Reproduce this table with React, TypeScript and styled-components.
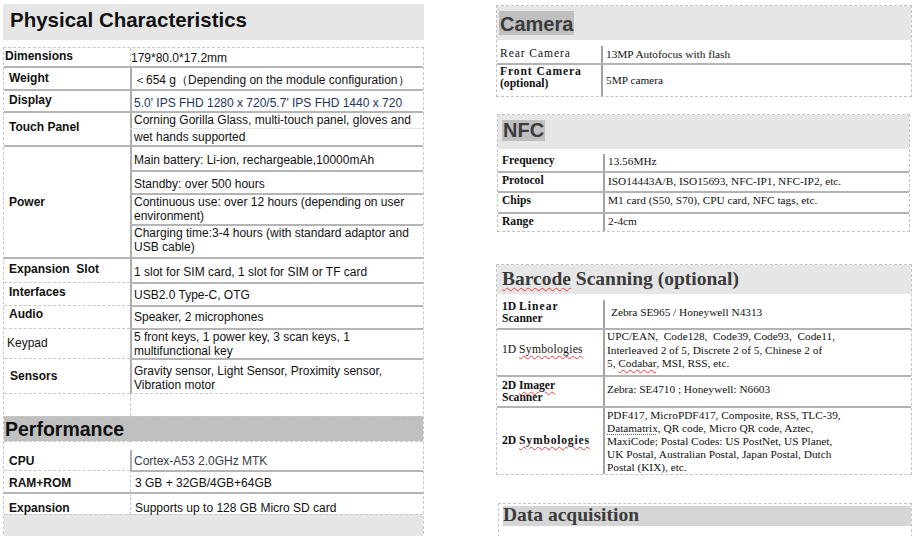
import React from 'react';
import styled, { createGlobalStyle } from 'styled-components';

type Line = 'none' | 'solid' | 'dashed' | 'faint';
const border = (l: Line) =>
  l === 'solid'
    ? '2px solid #b5b5b5'
    : l === 'dashed'
    ? '1px dashed #c8c8c8'
    : l === 'faint'
    ? '1px solid #e4e4e4'
    : '0';
const shift = (dy = 0) =>
  `padding-top:${Math.max(0, 2 * dy)}px;padding-bottom:${Math.max(0, -2 * dy)}px;`;

const GlobalStyle = createGlobalStyle`
  *, *::before, *::after { box-sizing: border-box; }
  html, body { margin: 0; padding: 0; background: #fff; }
  body { font-family: "Liberation Sans", Arial, sans-serif; color: #111; }
`;

const Page = styled.main`
  display: flex;
  align-items: flex-start;
  width: 914px;
  height: 536px;
  overflow: hidden;
`;

/* ---------- left sheet ---------- */

const LeftColumn = styled.div`
  flex: none;
  width: 421px;
  margin-left: 3px;
  padding-top: 4px;
`;

const SheetTitle = styled.h1`
  margin: 0;
  height: 36px;
  padding: 0 0 4px 7px;
  background: #e6e6e6;
  font: bold 20.5px/32px "Liberation Sans", Arial, sans-serif;
  color: #111;
  white-space: nowrap;
`;

const Sheet = styled.div`
  margin-top: 7px;
  border: 1px dashed #c8c8c8;
  border-bottom: 0;
`;

const SheetRow = styled.div<{ $h: number }>`
  display: grid;
  grid-template-columns: 126px 1fr;
  height: ${(p) => p.$h}px;
`;

const RowLabel = styled.div<{ $top: Line; $pl: number; $dy: number; $weight: number }>`
  display: flex;
  align-items: center;
  border-top: ${(p) => border(p.$top)};
  padding-left: ${(p) => p.$pl}px;
  ${(p) => shift(p.$dy)}
  font-size: 12px;
  font-weight: ${(p) => p.$weight};
  white-space: nowrap;
  color: #111;
`;

const RowValue = styled.div<{ $top: Line; $div: 'solid' | 'dashed'; $from: number }>`
  display: flex;
  flex-direction: column;
  border-top: ${(p) => border(p.$top)};
  ${(p) =>
    p.$div === 'dashed'
      ? 'border-left: 1px dashed #c8c8c8;'
      : `background: linear-gradient(#adadad, #adadad) 0 ${p.$from}px / 2px 100% no-repeat;`}
`;

const ValueLine = styled.div<{ $h?: number; $top: Line; $dy: number; $pl: number; $color: string }>`
  ${(p) => (p.$h ? `height:${p.$h}px; flex:none;` : 'flex:1;')}
  display: flex;
  flex-direction: column;
  justify-content: center;
  border-top: ${(p) => border(p.$top)};
  padding-left: ${(p) => p.$pl}px;
  ${(p) => shift(p.$dy)}
  font-size: 12px;
  line-height: 14px;
  color: ${(p) => p.$color};
  white-space: nowrap;
`;

const Band = styled.div`
  height: 25px;
  border-top: 1px dashed #c8c8c8;
  background: #c0c0c0;
  padding-left: 1px;
  font: bold 19.5px/24px "Liberation Sans", Arial, sans-serif;
  color: #111;
`;

const SheetFooter = styled.div`
  height: 30px;
  border-top: 1px dashed #c8c8c8;
  background: #e6e6e6;
`;

interface Sub {
  h?: number;
  top?: Line;
  dy?: number;
  lines: string[];
}
interface PRow {
  label: string;
  h: number;
  ltop: Line;
  vtop: Line;
  lpl?: number;
  ldy?: number;
  lw?: number;
  div: 'solid' | 'dashed';
  from?: number;
  vpl?: number;
  color?: string;
  subs: Sub[];
}

const physical: PRow[] = [
  { label: 'Dimensions', h: 18, ltop: 'none', vtop: 'none', lpl: 1, ldy: -1, div: 'dashed', vpl: 0, subs: [{ dy: 0.5, lines: ['179*80.0*17.2mm'] }] },
  { label: 'Weight', h: 23, ltop: 'solid', vtop: 'solid', ldy: -1, div: 'solid', subs: [{ dy: 1.5, lines: ['＜654 g（Depending on the module configuration）'] }] },
  { label: 'Display', h: 22, ltop: 'solid', vtop: 'solid', ldy: -1, div: 'solid', color: '#22375f', subs: [{ dy: 2, lines: ["5.0' IPS FHD 1280 x 720/5.7' IPS FHD 1440 x 720"] }] },
  {
    label: 'Touch Panel', h: 34, ltop: 'solid', vtop: 'solid', ldy: -2, div: 'solid',
    subs: [
      { h: 15, dy: -0.5, lines: ['Corning Gorilla Glass, multi-touch panel, gloves and'] },
      { top: 'faint', dy: 0, lines: ['wet hands supported'] },
    ],
  },
  {
    label: 'Power', h: 112, ltop: 'solid', vtop: 'solid', ldy: 0, div: 'solid',
    subs: [
      { h: 23, dy: 1.5, lines: ['Main battery: Li-ion, rechargeable,10000mAh'] },
      { h: 23, top: 'solid', dy: 1, lines: ['Standby: over 500 hours'] },
      { h: 31, top: 'solid', dy: -1, lines: ['Continuous use: over 12 hours (depending on user', 'environment)'] },
      { top: 'solid', dy: -1.5, lines: ['Charging time:3-4 hours (with standard adaptor and', 'USB cable)'] },
    ],
  },
  { label: 'Expansion\u00a0 Slot', h: 25, ltop: 'solid', vtop: 'solid', ldy: -1.5, div: 'solid', subs: [{ dy: 1.5, lines: ['1 slot for SIM card, 1 slot for SIM or TF card'] }] },
  { label: 'Interfaces', h: 23, ltop: 'dashed', vtop: 'solid', ldy: -2.5, div: 'solid', subs: [{ dy: 0.5, lines: ['USB2.0 Type-C, OTG'] }] },
  { label: 'Audio', h: 23, ltop: 'dashed', vtop: 'solid', ldy: -3.5, div: 'solid', subs: [{ dy: -0.5, lines: ['Speaker, 2 microphones'] }] },
  { label: 'Keypad', h: 30, ltop: 'dashed', vtop: 'solid', lpl: 3, lw: 400, ldy: -2, div: 'solid', subs: [{ dy: -1, lines: ['5 front keys, 1 power key, 3 scan keys, 1', 'multifunctional key'] }] },
  { label: 'Sensors', h: 35, ltop: 'dashed', vtop: 'solid', lpl: 6, ldy: -0.5, div: 'solid', subs: [{ dy: 1.5, lines: ['Gravity sensor, Light Sensor, Proximity sensor,', 'Vibration motor'] }] },
  { label: '', h: 23, ltop: 'dashed', vtop: 'dashed', div: 'dashed', subs: [{ lines: [] }] },
];

const performance: PRow[] = [
  { label: 'CPU', h: 29, ltop: 'dashed', vtop: 'dashed', ldy: 5, div: 'solid', from: 8, color: '#353c48', subs: [{ dy: 5, lines: ['Cortex-A53 2.0GHz MTK'] }] },
  { label: 'RAM+ROM', h: 22, ltop: 'dashed', vtop: 'solid', ldy: 1.5, div: 'dashed', subs: [{ dy: 0.5, lines: ['3 GB + 32GB/4GB+64GB'] }] },
  { label: 'Expansion', h: 22, ltop: 'solid', vtop: 'solid', ldy: 3.5, div: 'dashed', subs: [{ dy: 3.5, lines: ['Supports up to 128 GB Micro SD card'] }] },
];

const SheetRows: React.FC<{ rows: PRow[] }> = ({ rows }) => (
  <>
    {rows.map((r, i) => (
      <SheetRow key={i} $h={r.h}>
        <RowLabel $top={r.ltop} $pl={r.lpl ?? 5} $dy={r.ldy ?? 0} $weight={r.lw ?? 700}>
          {r.label}
        </RowLabel>
        <RowValue $top={r.vtop} $div={r.div} $from={r.from ?? 0}>
          {r.subs.map((s, j) => (
            <ValueLine
              key={j}
              $h={s.h}
              $top={s.top ?? 'none'}
              $dy={s.dy ?? 0}
              $pl={r.vpl ?? 4}
              $color={r.color ?? '#111'}
            >
              {s.lines.map((l, k) => (
                <span key={k}>{l}</span>
              ))}
            </ValueLine>
          ))}
        </RowValue>
      </SheetRow>
    ))}
  </>
);

/* ---------- right boxes ---------- */

const RightColumn = styled.div`
  flex: none;
  width: 416px;
  margin-left: 72px;
  padding-top: 5px;
  display: flex;
  flex-direction: column;
`;

const SpecBox = styled.section<{ $mt: number; $ml: number; $w: number; $h?: number }>`
  flex: none;
  margin: ${(p) => p.$mt}px 0 0 ${(p) => p.$ml}px;
  width: ${(p) => p.$w}px;
  ${(p) => (p.$h ? `height:${p.$h}px;` : '')}
  border: 1px dashed #c4c4c4;
  font-family: "Liberation Serif", "Times New Roman", serif;
  color: #111;
`;

const BoxHead = styled.header<{ $h: number; $pt: number; $pl: number; $pr?: number; $bg?: string }>`
  height: ${(p) => p.$h}px;
  padding: ${(p) => p.$pt}px ${(p) => p.$pr ?? 0}px 0 ${(p) => p.$pl}px;
  background: ${(p) => p.$bg ?? '#e6e6e6'};
`;

const HeadMark = styled.h2<{ $lh: number; $pt: number }>`
  display: inline-block;
  margin: 0;
  padding: ${(p) => p.$pt}px 1px 0;
  background: #bfbfbf;
  font: bold 20px/${(p) => p.$lh}px "Liberation Sans", Arial, sans-serif;
  color: #3b3b3b;
`;

const SerifHeading = styled.h2<{ $bg?: string; $lh: number; $h?: number }>`
  margin: 0;
  ${(p) => (p.$h ? `height:${p.$h}px;` : '')}
  background: ${(p) => p.$bg ?? 'transparent'};
  font: bold 19.5px/${(p) => p.$lh}px "Liberation Serif", "Times New Roman", serif;
  color: #3b3b3b;
  white-space: nowrap;
`;

const SpecRow = styled.div<{ $h: number; $cols: number; $top?: boolean }>`
  display: grid;
  grid-template-columns: ${(p) => p.$cols}px 1fr;
  height: ${(p) => p.$h}px;
  border-top: ${(p) => (p.$top ? '2px solid #b3b3b3' : '0')};
`;

const SpecLabel = styled.div<{ $pl: number; $dy: number; $weight?: number }>`
  display: flex;
  flex-direction: column;
  justify-content: center;
  padding-left: ${(p) => p.$pl}px;
  ${(p) => shift(p.$dy)}
  font-size: 11.6px;
  line-height: 12px;
  font-weight: ${(p) => p.$weight ?? 700};
  white-space: nowrap;
`;

const SpecValue = styled.div<{ $from?: number; $pl: number; $dy: number; $lh?: number }>`
  display: flex;
  flex-direction: column;
  justify-content: center;
  padding-left: ${(p) => p.$pl}px;
  ${(p) => shift(p.$dy)}
  background: linear-gradient(#a3a3a3, #a3a3a3) 0 ${(p) => p.$from ?? 0}px / 2px 100% no-repeat;
  font-size: 11.3px;
  line-height: ${(p) => p.$lh ?? 13}px;
  white-space: nowrap;
`;

const TextLine = styled.span`
  display: block;
`;

const Spaced = styled.span<{ $ls: number }>`
  letter-spacing: ${(p) => p.$ls}px;
`;

const Squiggle = styled.span`
  text-decoration: underline wavy #e0413a;
  text-decoration-thickness: 1px;
  text-underline-offset: 2px;
`;

const Dotted = styled.span`
  text-decoration: underline dotted #55658a;
  text-underline-offset: 2px;
`;

export default function App() {
  return (
    <>
      <GlobalStyle />
      <Page>
        <LeftColumn>
          <SheetTitle>Physical Characteristics</SheetTitle>
          <Sheet>
            <SheetRows rows={physical} />
            <Band>Performance</Band>
            <SheetRows rows={performance} />
            <SheetFooter />
          </Sheet>
        </LeftColumn>

        <RightColumn>
          <SpecBox $mt={0} $ml={0} $w={416}>
            <BoxHead $h={34} $pt={5} $pl={2}>
              <HeadMark $lh={22} $pt={2}>Camera</HeadMark>
            </BoxHead>
            <SpecRow $h={23} $cols={104}>
              <SpecLabel $pl={3} $dy={2} $weight={400}>
                <Spaced $ls={0.9}>Rear Camera</Spaced>
              </SpecLabel>
              <SpecValue $from={6} $pl={5} $dy={2.5}>13MP Autofocus with flash</SpecValue>
            </SpecRow>
            <SpecRow $h={33} $cols={104} $top>
              <SpecLabel $pl={3} $dy={-3}>
                <TextLine>
                  <Spaced $ls={0.9}>Front Camera</Spaced>
                </TextLine>
                <TextLine>(optional)</TextLine>
              </SpecLabel>
              <SpecValue $pl={5} $dy={-0.5}>5MP camera</SpecValue>
            </SpecRow>
          </SpecBox>

          <SpecBox $mt={17} $ml={1} $w={413}>
            <BoxHead $h={34} $pt={5} $pl={4}>
              <HeadMark $lh={21} $pt={0}>NFC</HeadMark>
            </BoxHead>
            <SpecRow $h={22} $cols={105}>
              <SpecLabel $pl={4} $dy={1}>Frequency</SpecLabel>
              <SpecValue $from={5} $pl={5} $dy={1}>13.56MHz</SpecValue>
            </SpecRow>
            <SpecRow $h={20} $cols={105} $top>
              <SpecLabel $pl={4} $dy={-1}>Protocol</SpecLabel>
              <SpecValue $pl={5} $dy={-1}>ISO14443A/B, ISO15693, NFC-IP1, NFC-IP2, etc.</SpecValue>
            </SpecRow>
            <SpecRow $h={21} $cols={105} $top>
              <SpecLabel $pl={4} $dy={-2}>Chips</SpecLabel>
              <SpecValue $pl={5} $dy={-2}>M1 card (S50, S70), CPU card, NFC tags, etc.</SpecValue>
            </SpecRow>
            <SpecRow $h={19} $cols={105} $top>
              <SpecLabel $pl={4} $dy={-1}>Range</SpecLabel>
              <SpecValue $pl={5} $dy={-1}>2-4cm</SpecValue>
            </SpecRow>
          </SpecBox>

          <SpecBox $mt={32} $ml={0} $w={416}>
            <BoxHead $h={29} $pt={2} $pl={5}>
              <SerifHeading $lh={24}>
                <Squiggle>Barcode</Squiggle> Scanning (optional)
              </SerifHeading>
            </BoxHead>
            <SpecRow $h={34} $cols={106}>
              <SpecLabel $pl={5} $dy={2}>
                <TextLine>
                  1D <Spaced $ls={1}>Linear</Spaced>
                </TextLine>
                <TextLine>Scanner</TextLine>
              </SpecLabel>
              <SpecValue $from={6} $pl={8} $dy={1}>Zebra SE965 / Honeywell N4313</SpecValue>
            </SpecRow>
            <SpecRow $h={47} $cols={106} $top>
              <SpecLabel $pl={5} $dy={-2.5} $weight={400}>
                <TextLine>
                  1D <Spaced $ls={0.3}><Squiggle>Symbologies</Squiggle></Spaced>
                </TextLine>
              </SpecLabel>
              <SpecValue $pl={4} $dy={-2.5} $lh={13.5}>
                <TextLine>UPC/EAN,&nbsp; Code128,&nbsp; Code39, Code93,&nbsp; Code11,</TextLine>
                <TextLine>Interleaved 2 of 5, Discrete 2 of 5, Chinese 2 of</TextLine>
                <TextLine>
                  5, <Squiggle>Codabar</Squiggle>, MSI, RSS, etc.
                </TextLine>
              </SpecValue>
            </SpecRow>
            <SpecRow $h={31} $cols={106} $top>
              <SpecLabel $pl={5} $dy={0}>
                <TextLine>
                  2D <Squiggle>Imager</Squiggle>
                </TextLine>
                <TextLine>Scanner</TextLine>
              </SpecLabel>
              <SpecValue $pl={4} $dy={-2.5}>Zebra: SE4710 ; Honeywell: N6603</SpecValue>
            </SpecRow>
            <SpecRow $h={68} $cols={106} $top>
              <SpecLabel $pl={5} $dy={0}>
                <TextLine>
                  2D <Spaced $ls={0.8}><Squiggle>Symbologies</Squiggle></Spaced>
                </TextLine>
              </SpecLabel>
              <SpecValue $pl={4} $dy={0} $lh={13}>
                <TextLine>PDF417, MicroPDF417, Composite, RSS, TLC-39,</TextLine>
                <TextLine>
                  <Dotted>Datamatrix</Dotted>, QR code, Micro QR code, Aztec,
                </TextLine>
                <TextLine>MaxiCode; Postal Codes: US PostNet, US Planet,</TextLine>
                <TextLine>UK Postal, Australian Postal, Japan Postal, Dutch</TextLine>
                <TextLine>Postal (KIX), etc.</TextLine>
              </SpecValue>
            </SpecRow>
          </SpecBox>

          <SpecBox $mt={28} $ml={2} $w={414} $h={60}>
            <BoxHead $h={24} $pt={2} $pl={4} $pr={0} $bg="transparent">
              <SerifHeading $bg="#d6d6d6" $lh={17} $h={20}>
                Data acquisition
              </SerifHeading>
            </BoxHead>
          </SpecBox>
        </RightColumn>
      </Page>
    </>
  );
}
